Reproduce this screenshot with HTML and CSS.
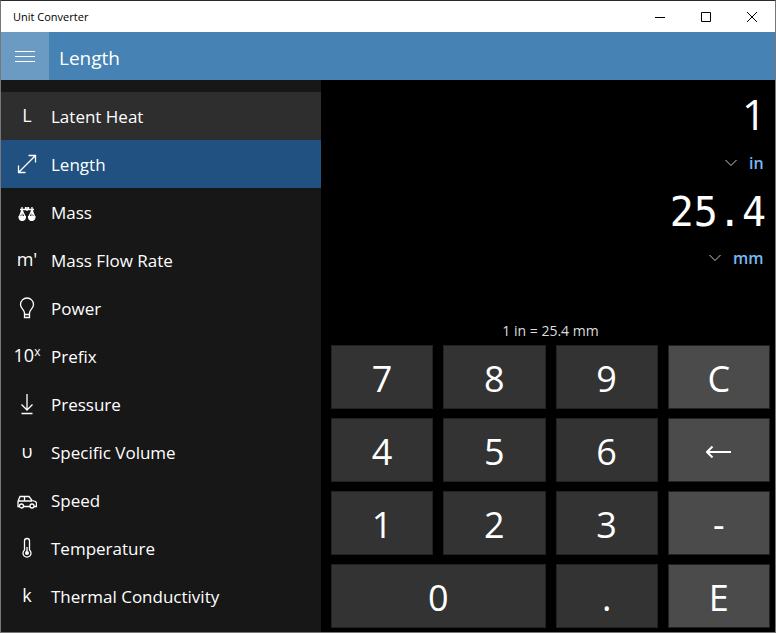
FILE: index.html
```html
<!DOCTYPE html>
<html lang="en">
<head>
    <meta charset="UTF-8">
    <meta name="viewport" content="width=device-width, initial-scale=1.0">
    <title>Unit Converter</title>
    <link rel="stylesheet" href="styles.css">
</head>
<body>
    <div class="window">
        <!-- Title bar -->
        <div class="titlebar">
            <span class="titlebar-text">Unit Converter</span>
            <button class="window-btn" aria-label="Minimize">
                <svg width="12" height="12" viewBox="0 0 12 12"><path d="M1 6.5h10"/></svg>
            </button>
            <button class="window-btn" aria-label="Maximize">
                <svg width="12" height="12" viewBox="0 0 12 12"><path d="M1.5 1.5h9v9h-9z"/></svg>
            </button>
            <button class="window-btn" aria-label="Close">
                <svg width="12" height="12" viewBox="0 0 12 12"><path d="M1 1l10 10M11 1L1 11"/></svg>
            </button>
        </div>

        <!-- Header -->
        <header class="header">
            <button class="menu-btn" aria-label="Menu">
                <svg width="20" height="12" viewBox="0 0 20 12"><path d="M0 1.5h20M0 6.500h20M0 11.500h20"/></svg>
            </button>
            <h1>Length</h1>
        </header>

        <div class="content">
            <!-- Categories -->
            <nav class="sidebar">
                <a class="category hover" href="#"><span class="icon icon-text">L</span>Latent Heat</a>
                <a class="category active" href="#">
                    <span class="icon"><svg width="20" height="20" viewBox="0 0 20 20"><path d="M2 18L18 2M11.500 1.500h7v7M1.500 11.500v7h7"/></svg></span>Length
                </a>
                <a class="category" href="#">
                    <span class="icon icon-low"><svg width="18" height="16" viewBox="0 0 18 16">
                        <path d="M2 3.500h14M4 1v4M14 1v4M9 1v4M7.500 1v3M10.500 1v3M4 4L1.500 10.500M4 4L7 10.500M14 4L11 10.500M14 4L16.500 10.500M4 5v5M14 5v5"/>
                        <path class="solid" d="M.5 10h7.500c.5 3-1.500 5-3.750 5S0 13 .5 10zM10 10h7.500c.5 3-1.500 5-3.750 5S9.500 13 10 10z"/>
                    </svg></span>Mass
                </a>
                <a class="category" href="#"><span class="icon icon-text">m'</span>Mass Flow Rate</a>
                <a class="category" href="#">
                    <span class="icon"><svg width="16" height="22" viewBox="0 0 16 22"><path d="M5.500 16C5.500 12.500 1.500 11.500 1.500 7.500a6.500 6.500 0 0 1 13 0c0 4-4 5-4 8.500v4.500h-5zM5.500 17.500h5"/></svg></span>Power
                </a>
                <a class="category" href="#"><span class="icon icon-text">10<sup>x</sup></span>Prefix</a>
                <a class="category" href="#">
                    <span class="icon"><svg width="14" height="22" viewBox="0 0 14 22"><path d="M7 1v16M1.500 11.500L7 17l5.500-5.500M1.500 20.500h11"/></svg></span>Pressure
                </a>
                <a class="category" href="#"><span class="icon icon-text">υ</span>Specific Volume</a>
                <a class="category" href="#">
                    <span class="icon icon-low"><svg width="20" height="14" viewBox="0 0 20 14">
                        <path d="M2.500 11.500H1V6.500L3 1.500h9l3 4 3.500 1 1 1.500v3.500H17M6.500 11.500h6.500M1.500 6h13.500M7.500 1.500V6"/>
                        <circle cx="4.500" cy="11" r="2"/>
                        <circle cx="15" cy="11" r="2"/>
                    </svg></span>Speed
                </a>
                <a class="category" href="#">
                    <span class="icon"><svg width="12" height="22" viewBox="0 0 12 22">
                        <path d="M3.500 13v-9a2.500 2.500 0 0 1 5 0v9a4 4 0 1 1-5 0zM6 10v5"/>
                        <circle class="solid" cx="6" cy="16" r="2"/>
                    </svg></span>Temperature
                </a>
                <a class="category" href="#"><span class="icon icon-text">k</span>Thermal Conductivity</a>
            </nav>

            <!-- Converter -->
            <main class="converter">
                <div class="display">
                    <input class="value" type="text" value="1" aria-label="Value to convert">
                    <div class="unit">
                        <svg width="12" height="8" viewBox="0 0 12 8"><path d="M.5 1L6 6.500 11.500 1"/></svg>
                        <select aria-label="From unit"><option>in</option></select>
                    </div>
                    <output class="value result">25.4</output>
                    <div class="unit">
                        <svg width="12" height="8" viewBox="0 0 12 8"><path d="M.5 1L6 6.500 11.500 1"/></svg>
                        <select aria-label="To unit"><option>mm</option></select>
                    </div>
                </div>
                <p class="summary">1 in = 25.4 mm</p>
                <div class="keypad">
                    <button class="key">7</button>
                    <button class="key">8</button>
                    <button class="key">9</button>
                    <button class="key key-alt">C</button>
                    <button class="key">4</button>
                    <button class="key">5</button>
                    <button class="key">6</button>
                    <button class="key key-alt" aria-label="Backspace">
                        <svg width="26" height="14" viewBox="0 0 26 14"><path d="M1 8H25M6.500 2.500L1 8l5.500 5.500"/></svg>
                    </button>
                    <button class="key">1</button>
                    <button class="key">2</button>
                    <button class="key">3</button>
                    <button class="key key-alt">-</button>
                    <button class="key key-wide">0</button>
                    <button class="key">.</button>
                    <button class="key key-alt">E</button>
                </div>
            </main>
        </div>
    </div>
</body>
</html>
```

FILE: styles.css
```css
* {
    margin: 0;
    padding: 0;
    box-sizing: border-box;
}
body {
    font-family: "Open Sans", "Noto Sans", sans-serif;
    background-color: #000;
    color: #fff;
}
button, input, select {
    font: inherit;
    color: inherit;
    background: none;
    border: none;
    border-radius: 0;
}
svg {
    display: block;
    fill: none;
    stroke: currentColor;
}
.window {
    display: flex;
    flex-direction: column;
    height: 100vh;
    border: 1px solid #777;
    border-top-color: #2b2b2b;
}

/* Title bar */
.titlebar {
    display: flex;
    flex: none;
    height: 31px;
    align-items: center;
    background-color: #fff;
    color: #000;
}
.titlebar-text {
    flex: 1;
    padding-left: 12px;
    font-size: 11px;
}
.window-btn {
    display: flex;
    width: 46px;
    height: 100%;
    align-items: center;
    justify-content: center;
}

/* Header */
.header {
    display: flex;
    flex: none;
    height: 48px;
    align-items: center;
    background-color: #4682b4;
}
.header h1 {
    padding: 4px 0 0 10px;
    font-size: 19px;
    font-weight: normal;
}
.menu-btn {
    display: flex;
    width: 48px;
    height: 48px;
    align-items: center;
    justify-content: center;
    background-color: #6b9bc3;
}

/* Categories */
.content {
    display: flex;
    flex: 1;
    min-height: 0;
}
.sidebar {
    flex: none;
    width: 320px;
    padding-top: 12px;
    overflow: hidden;
    background-color: #171717;
}
.category {
    display: flex;
    height: 48px;
    align-items: center;
    font-size: 17px;
    color: #fff;
    text-decoration: none;
}
.category.hover {
    background-color: #2e2e2e;
}
.category.active {
    background-color: #215180;
}
.icon {
    display: flex;
    width: 50px;
    padding-left: 2px;
    justify-content: center;
}
.icon svg {
    stroke-width: 1.3;
}
.icon-text {
    padding-bottom: 2px;
    font-size: 18px;
    font-weight: 500;
}
.icon-low {
    padding-top: 4px;
}
.icon sup {
    font-size: 12px;
}
.icon .solid {
    fill: currentColor;
    stroke: none;
}

/* Converter */
.converter {
    display: flex;
    flex: 1;
    min-width: 0;
    flex-direction: column;
    padding: 4px 5px 4px 10px;
}
.display {
    flex: 1;
}
.value {
    display: block;
    width: 100%;
    height: 63px;
    padding: 0 4px 4px 0;
    line-height: 59px;
    font-size: 42px;
    text-align: right;
}
.result {
    padding: 2px 4px 0 0;
    line-height: 63px;
    font-family: "DejaVu Sans Mono", monospace;
    font-size: 40px;
}
.unit {
    display: flex;
    height: 32px;
    align-items: center;
    justify-content: flex-end;
    gap: 12px;
    padding-right: 6px;
    color: #76b9f5;
    font-size: 16px;
    font-weight: 600;
}
.unit select {
    appearance: none;
}
.unit svg {
    color: #ccc;
}
.summary {
    padding-bottom: 3px;
    line-height: 22px;
    font-size: 14px;
    text-align: center;
    color: #ddd;
}
.keypad {
    display: grid;
    grid-template-columns: repeat(4, 1fr);
    grid-auto-rows: 64px;
    gap: 9px 10px;
}
.key {
    display: flex;
    align-items: center;
    justify-content: center;
    padding-top: 2px;
    border: 1px solid #222;
    background-color: #333;
    font-size: 36px;
}
.key svg {
    stroke-width: 2;
}
.key-alt {
    background-color: #4b4b4b;
}
.key-wide {
    grid-column: span 2;
}
```
